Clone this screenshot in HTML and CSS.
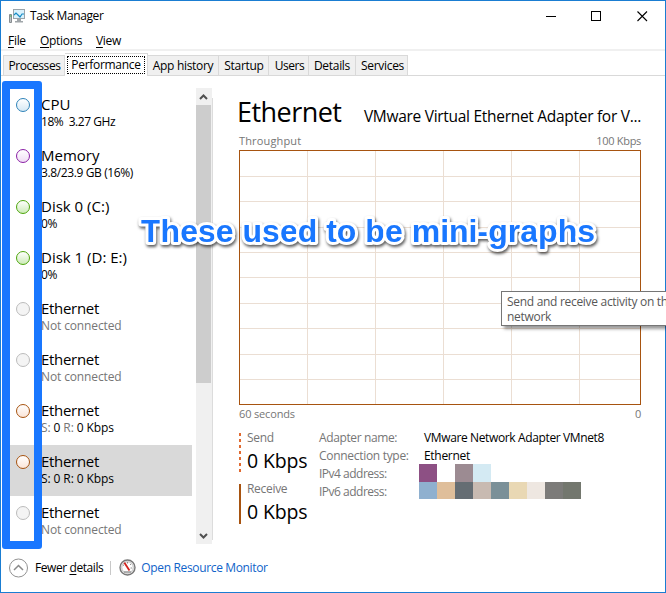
FILE: index.html
```html
<!DOCTYPE html>
<html lang="en">
<head>
<meta charset="utf-8">
<title>Task Manager</title>
<link rel="stylesheet" href="styles.css">
</head>
<body>
<div class="window">
  <header class="titlebar">
    <svg class="app-icon" width="17" height="15" viewBox="0 0 17 15">
      <path d="M.5 5.500h2v8h-2z" fill="#bfc4c7" stroke="#878c90"/>
      <path d="M1 7h1.500" stroke="#38b54a"/>
      <rect x="4.500" y=".5" width="11" height="9" fill="#d9f1fc" stroke="#9aa4aa"/>
      <path d="M5 6l2-2 2 2 2 2 2-3h2" fill="none" stroke="#168cc5" stroke-width="1.200"/>
      <path d="M8 10h4v2h2v1.500H6V12h2z" fill="#a0a6aa"/>
    </svg>
    <span class="title">Task Manager</span>
    <svg class="controls" width="104" height="12" viewBox="0 0 104 12" fill="none" stroke="#000">
      <path d="M0 6.500h10M45.500 1.500h9v9h-9z" shape-rendering="crispEdges"/>
      <path d="M91.500 1.500l9.500 9.500M101 1.500l-9.500 9.500" stroke-width="1.1"/>
    </svg>
  </header>
  <nav class="menu"><span class="m-file"><u>F</u>ile</span><span class="m-options"><u>O</u>ptions</span><span class="m-view"><u>V</u>iew</span></nav>
  <nav class="tabs">
    <span class="tab t-proc">Processes</span>
    <span class="tab active t-perf"><span class="focus">Performance</span></span>
    <span class="tab t-app">App history</span>
    <span class="tab t-start">Startup</span>
    <span class="tab t-users">Users</span>
    <span class="tab t-details">Details</span>
    <span class="tab t-services">Services</span>
  </nav>
  <main class="body">
    <section class="list">
      <div class="row"><i class="dot cpu"></i><div><div class="name n-wide">CPU</div><div class="sub s-cpu">18%&nbsp; 3.27 GHz</div></div></div>
      <div class="row"><i class="dot memory"></i><div><div class="name n-wide">Memory</div><div class="sub s-memory">3.8/23.9 GB (16%)</div></div></div>
      <div class="row"><i class="dot disk"></i><div><div class="name n-wide">Disk 0 (C:)</div><div class="sub">0%</div></div></div>
      <div class="row"><i class="dot disk"></i><div><div class="name n-wide">Disk 1 (D: E:)</div><div class="sub">0%</div></div></div>
      <div class="row"><i class="dot off"></i><div><div class="name">Ethernet</div><div class="sub muted state">Not connected</div></div></div>
      <div class="row"><i class="dot off"></i><div><div class="name">Ethernet</div><div class="sub muted state">Not connected</div></div></div>
      <div class="row"><i class="dot net"></i><div><div class="name">Ethernet</div><div class="sub rate"><span class="muted">S:</span> 0 <span class="muted">R:</span> 0 Kbps</div></div></div>
      <div class="row selected"><i class="dot net"></i><div><div class="name">Ethernet</div><div class="sub rate">S: 0 R: 0 Kbps</div></div></div>
      <div class="row"><i class="dot off"></i><div><div class="name">Ethernet</div><div class="sub muted state">Not connected</div></div></div>
    </section>
    <div class="scrollbar">
      <svg width="16" height="17" viewBox="0 0 16 17"><path d="M4 11l3.500-3.500L11 11" fill="none" stroke="#505050" stroke-width="2"/></svg>
      <div class="thumb"></div>
      <svg width="16" height="17" viewBox="0 0 16 17"><path d="M4 7l3.500 3.500L11 7" fill="none" stroke="#505050" stroke-width="2"/></svg>
    </div>
    <div class="divider"></div>
    <section class="detail">
      <div class="heading"><h1>Ethernet</h1><span class="device">VMware Virtual Ethernet Adapter for V...</span></div>
      <div class="axis top"><span class="a-through">Throughput</span><span class="a-max">100 Kbps</span></div>
      <svg class="graph" width="402" height="255" viewBox="0 0 402 255" fill="none" shape-rendering="crispEdges">
        <path d="M68.500 1v253M136.500 1v253M204.500 1v253M272.500 1v253M340.500 1v253M1 26.500h400M1 51.500h400M1 77.500h400M1 102.500h400M1 127.500h400M1 153.500h400M1 178.500h400M1 204.500h400M1 229.500h400" stroke="#ebded3"/>
        <rect x=".5" y=".5" width="401" height="254" stroke="#a75310"/>
      </svg>
      <div class="axis bottom"><span class="a-sec">60 seconds</span><span>0</span></div>
      <div class="stats">
        <div class="rates">
          <div class="stat"><svg width="2" height="40"><path d="M1 0v40" stroke="#e06a30" stroke-width="2" stroke-dasharray="3 3"/></svg><div><div class="label">Send</div><div class="value">0 Kbps</div></div></div>
          <div class="stat"><svg width="2" height="40"><path d="M1 0v40" stroke="#a75310" stroke-width="2"/></svg><div><div class="label">Receive</div><div class="value">0 Kbps</div></div></div>
        </div>
        <div class="info">
          <span class="key k-name">Adapter name:</span><span class="val v-name">VMware Network Adapter VMnet8</span>
          <span class="key k-type">Connection type:</span><span class="val v-type">Ethernet</span>
          <span class="key k-ip">IPv4 address:</span><span class="mosaic"><i class="c1"></i><i></i><i class="c2"></i><i class="c3"></i></span>
          <span class="key k-ip">IPv6 address:</span><span class="mosaic short"><i class="c4"></i><i class="c5"></i><i class="c6"></i><i class="c7"></i><i class="c8"></i><i class="c9"></i><i class="c10"></i><i class="c11"></i><i class="c12"></i></span>
        </div>
      </div>
    </section>
  </main>
  <footer class="footer">
    <svg width="20" height="20" viewBox="0 0 20 20" fill="none"><circle cx="9.500" cy="10" r="9" stroke="#929292"/><path d="M5 12l4.500-4.500L14 12" stroke="#8a8a8a" stroke-width="1.500"/></svg>
    <span class="fewer">Fewer <u>d</u>etails</span>
    <i class="sep"></i>
    <svg class="gauge" width="17" height="17" viewBox="0 0 17 17"><circle cx="8.500" cy="8.500" r="7.500" fill="#eee" stroke="#777" stroke-width="1.400"/><circle cx="8.500" cy="8.500" r="5.700" fill="#fff" stroke="#aaa" stroke-width=".7"/><path d="M4 6l1 .5M8.500 3v1.500M12 5l-1 1M13 9h-1.500" stroke="#777" stroke-width=".8"/><path d="M4.500 4l1.700-.8 5 7.800-1.500 1z" fill="#d2231d"/><path d="M5 13h7" stroke="#999" stroke-width="1.500"/></svg>
    <span class="link">Open Resource Monitor</span>
  </footer>
</div>
<div class="frame"></div>
<svg class="annotation" width="480" height="54" viewBox="0 0 480 54"><text x="11" y="37" textLength="454">These used to be mini-graphs</text></svg>
<div class="tooltip">Send and receive activity on this<br>network</div>
</body>
</html>
```
FILE: styles.css
```css
* { box-sizing: border-box; }
body {
  margin: 0;
  width: 666px;
  height: 593px;
  position: relative;
  overflow: hidden;
  background: #fff;
  color: #000;
  font: 12px/16px "Open Sans", "Noto Sans", sans-serif;
  letter-spacing: -0.3px;
  white-space: nowrap;
}
.window {
  width: 666px;
  height: 593px;
  border: 1px solid #1a7dd2;
  display: flex;
  flex-direction: column;
}
.titlebar { height: 30px; display: flex; align-items: center; padding-left: 8px; }
.title { margin-left: 4px; letter-spacing: -0.38px; }
.controls { margin-left: auto; margin-right: 15px; }
.menu { height: 20px; padding: 2px 0 0 7px; display: flex; border-bottom: 2px solid #f0f0f0; flex: none; }
.menu span { flex: none; }
.m-file { width: 32px; }
.m-options { width: 56px; }
u { text-underline-offset: 2px; text-decoration-thickness: 1px; }
.tabs {
  height: 25px;
  flex: none;
  display: flex;
  align-items: flex-end;
  padding-left: 2px;
  border-bottom: 1px solid #d9d9d9;
}
.tab {
  height: 20px;
  background: #f0f0f0;
  border: 1px solid #d9d9d9;
  border-width: 1px 1px 0 0;
  text-align: center;
  line-height: 20px;
}
.t-proc { width: 62px; border-left-width: 1px; padding-left: 1px; letter-spacing: -0.4px; }
.t-perf { width: 83px; }
.t-app { width: 71px; }
.t-start { width: 50px; padding-left: 1px; }
.t-users { width: 40px; padding-left: 2px; letter-spacing: -0.45px; }
.t-details { width: 47px; }
.t-services { width: 52px; padding-left: 2px; }
.active { height: 23px; margin-bottom: -1px; background: #fff; padding: 2px; }
.focus { display: block; height: 18px; line-height: 16px; border: 1px dotted #000; }
.body { display: flex; height: 468px; padding-top: 12px; flex: none; }
.list { width: 182px; margin-left: 9px; }
.row { height: 51px; display: flex; padding: 6px 0 0 6px; }
.selected { background: #d9d9d9; }
.dot { width: 14px; height: 14px; margin: 4px 11px 0 0; border: 1px solid; border-radius: 50%; flex: none; }
.cpu { border-color: #2e83b9; background: linear-gradient(#fff, #d5e8f4); }
.memory { border-color: #8b21a6; background: linear-gradient(#fff, #f0dcf5); }
.disk { border-color: #4da60c; background: linear-gradient(#fff, #cdebb8); }
.off { border-color: #bcbcbc; background: #f4f4f4; }
.net { border-color: #a75310; background: linear-gradient(#fff, #fbe5d8); }
.name { font-size: 15px; line-height: 20px; letter-spacing: -0.3px; }
.n-wide { letter-spacing: 0; }
.sub { line-height: 15px; }
.s-cpu { letter-spacing: -0.45px; }
.s-memory { letter-spacing: -0.38px; }
.state { letter-spacing: -0.13px; }
.rate { letter-spacing: -0.1px; }
.muted { color: #767676; }
.scrollbar { width: 16px; height: 456px; margin-left: 4px; background: #f0f0f0; display: flex; flex-direction: column; }
.scrollbar svg { flex: none; }
.thumb { width: 15px; height: 278px; background: #cdcdcd; margin-bottom: auto; }
.divider { width: 1px; height: 442px; margin-top: 10px; background: #dcdcdc; }
.detail { width: 402px; margin-left: 26px; }
.heading { display: flex; align-items: baseline; justify-content: space-between; height: 45px; }
h1 { margin: 0 0 0 -2px; font-size: 27px; line-height: 48px; font-weight: 400; letter-spacing: -0.55px; }
.device { font-size: 15.5px; letter-spacing: -0.29px; }
.axis { display: flex; justify-content: space-between; color: #767676; font-size: 11px; height: 16px; }
.top { height: 17px; }
.a-through { letter-spacing: 0.15px; }
.a-sec { letter-spacing: -0.15px; }
.graph { display: block; }
.bottom { margin-top: 1px; }
.stats { display: flex; margin-top: 11px; }
.rates { width: 80px; display: flex; flex-direction: column; gap: 11px; }
.stat { height: 40px; display: flex; gap: 6px; }
.stat svg { flex: none; }
.label { color: #767676; line-height: 14px; margin-top: -2px; }
.value { font-size: 19.5px; line-height: 28px; margin-top: 2px; letter-spacing: -0.15px; }
.info { display: grid; grid-template-columns: 105px auto; grid-auto-rows: 18px; line-height: 18px; margin-top: -5px; }
.info .key, .info .val { padding-top: 1px; height: 18px; }
.key { color: #767676; }
.k-name { letter-spacing: -0.38px; }
.k-ip { letter-spacing: -0.5px; }
.v-name { letter-spacing: -0.37px; }
.mosaic { display: flex; margin-left: -5px; height: 18px; }
.short { height: 17px; }
.mosaic i { width: 18px; }
.c1 { background: #8d5084; }
.c2 { background: #9c8b92; }
.c3 { background: #d4eaf3; }
.c4 { background: #8fb0cf; }
.c5 { background: #dfbe9a; }
.c6 { background: #656d73; }
.c7 { background: #c8bab1; }
.c8 { background: #7b9098; }
.c9 { background: #e9d8b4; }
.c10 { background: #eee7e1; }
.c11 { background: #7c7b79; }
.c12 { background: #73776e; }
.footer { display: flex; align-items: center; height: 47px; padding-left: 8px; }
.fewer { margin-left: 6px; letter-spacing: -0.42px; }
.sep { width: 1px; height: 14px; background: #c8c8c8; margin: 0 8px 0 7px; }
.link { color: #0f63c9; margin-left: 5px; letter-spacing: -0.35px; }
.frame {
  position: absolute;
  left: 2px;
  top: 81px;
  width: 40px;
  height: 468px;
  border: 8px solid #1977ff;
  border-radius: 3px;
}
.annotation { position: absolute; left: 130px; top: 205px; }
.annotation text {
  font: bold 32px "Liberation Sans", sans-serif;
  letter-spacing: 0;
  fill: #1977ff;
  stroke: #fff;
  stroke-width: 6px;
  stroke-linejoin: round;
  paint-order: stroke;
  filter: drop-shadow(1px 2px 1.5px rgba(0, 0, 0, 0.65));
}
.tooltip {
  position: absolute;
  left: 501px;
  top: 291px;
  width: 180px;
  height: 35px;
  padding: 2px 5px;
  border: 1px solid #767676;
  background: #fff;
  color: #575757;
  line-height: 15px;
  box-shadow: 3px 3px 3px rgba(0, 0, 0, 0.4);
}
```
